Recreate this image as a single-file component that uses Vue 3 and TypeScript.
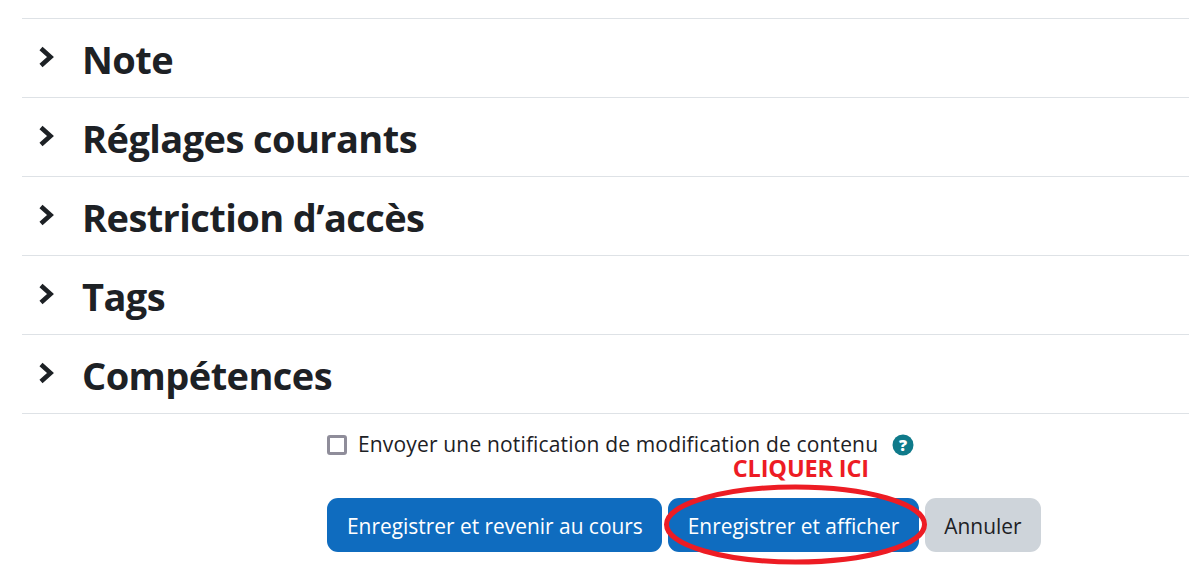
<script setup lang="ts">
const sections: string[] = ['Note', 'Réglages courants', 'Restriction d’accès', 'Tags', 'Compétences']
</script>

<template>
  <div class="page">
    <div class="sections">
      <div v-for="section in sections" :key="section" class="section">
        <svg class="chevron" width="16" height="22" viewBox="0 0 16 22">
          <path d="M3 2.5 L12.5 11 L3 19.5" fill="none" stroke="#1d2125" stroke-width="4.6" stroke-linejoin="miter" />
        </svg>
        <h3 class="section-title">{{ section }}</h3>
      </div>
    </div>

    <div class="footer">
      <div class="notify">
        <span class="checkbox"></span>
        <span class="notify-label">Envoyer une notification de modification de contenu</span>
        <svg class="help" width="22" height="22" viewBox="0 0 22 22">
          <circle cx="11" cy="11" r="10.5" fill="#0f7a8a" />
          <text x="11" y="17" text-anchor="middle" class="help-mark">?</text>
        </svg>
      </div>
      <div class="buttons">
        <button class="btn primary">Enregistrer et revenir au cours</button>
        <div class="highlighted">
          <button class="btn primary">Enregistrer et afficher</button>
          <span class="click-here">CLIQUER ICI</span>
          <svg class="circle" width="265" height="83" viewBox="0 0 265 83">
            <ellipse cx="132.5" cy="41.5" rx="129" ry="37.5" fill="none" stroke="#ed1c24" stroke-width="5" />
          </svg>
        </div>
        <button class="btn secondary">Annuler</button>
      </div>
    </div>
  </div>
</template>

<style>
html,
body {
  background: #fff;
}
</style>

<style scoped>
.page {
  height: 574px;
  overflow: hidden;
  padding-top: 18px;
  box-sizing: border-box;
  font-family: 'Open Sans', 'Noto Sans', sans-serif;
  color: #1d2125;
}
.sections {
  margin-left: 22px;
  border-top: 1px solid #dee2e6;
}
.section {
  display: flex;
  align-items: center;
  height: 78px;
  border-bottom: 1px solid #dee2e6;
}
.chevron {
  margin-left: 16px;
  margin-top: -3px;
  width: 16px;
  flex-shrink: 0;
}
.section-title {
  margin: 2px 0 0 28px;
  font-size: 38px;
  font-weight: 700;
  line-height: 76px;
  letter-spacing: -0.58px;
}
.footer {
  margin-left: 327px;
}
.notify {
  display: flex;
  align-items: center;
  height: 22px;
  margin-top: 20px;
}
.checkbox {
  width: 20px;
  height: 20px;
  box-sizing: border-box;
  border: 3px solid #8f8d9a;
  border-radius: 3px;
}
.notify-label {
  margin: -2px 0 0 11px;
  font-size: 21px;
  line-height: 22px;
  letter-spacing: 0.16px;
  white-space: nowrap;
}
.help {
  margin-left: 14px;
}
.help-mark {
  font-family: 'Open Sans', sans-serif;
  font-size: 16px;
  font-weight: 800;
  fill: #fff;
}
.buttons {
  display: flex;
  gap: 6px;
  margin-top: 42px;
}
.btn {
  height: 54px;
  padding: 1px 20px 0;
  border: none;
  border-radius: 11px;
  font-family: inherit;
  font-size: 20.9px;
  white-space: nowrap;
}
.primary {
  background: #0f6cbf;
  color: #fff;
}
.secondary {
  padding: 1px 19px 0;
  background: #ced4da;
  color: #1d2125;
}
.buttons > .primary {
  padding-right: 19px;
}
.highlighted {
  position: relative;
  display: flex;
}
.click-here {
  position: absolute;
  left: 65px;
  top: -40px;
  font-size: 23.5px;
  line-height: 20px;
  font-weight: 700;
  color: #ed1c24;
  letter-spacing: -0.15px;
  white-space: nowrap;
}
.circle {
  position: absolute;
  left: -5px;
  top: -15px;
  pointer-events: none;
}
</style>
